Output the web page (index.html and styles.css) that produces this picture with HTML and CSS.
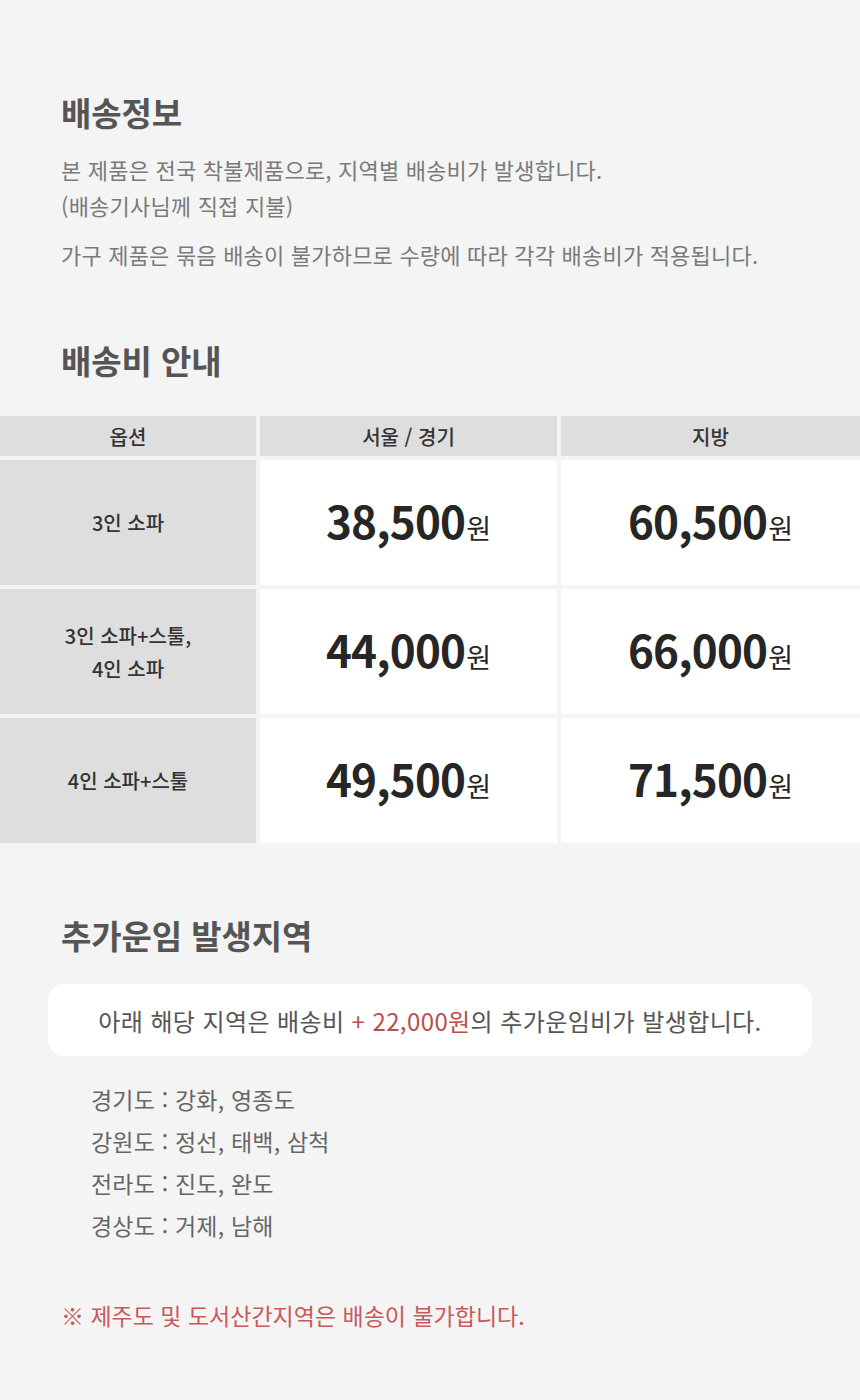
FILE: index.html
```html
<!DOCTYPE html>
<html lang="ko">
<head>
<meta charset="utf-8">
<link rel="stylesheet" href="styles.css">
</head>
<body>
<div class="page">
  <section class="info">
    <h2 class="title">배송정보</h2>
    <p class="desc">본 제품은 전국 착불제품으로, 지역별 배송비가 발생합니다.<br>(배송기사님께 직접 지불)</p>
    <p class="desc second">가구 제품은 묶음 배송이 불가하므로 수량에 따라 각각 배송비가 적용됩니다.</p>
  </section>

  <section class="fee">
    <h2 class="title">배송비 안내</h2>
  </section>
  <div class="table">
    <div class="th">옵션</div>
    <div class="th">서울 / 경기</div>
    <div class="th">지방</div>

    <div class="opt">3인 소파</div>
    <div class="price"><span class="amt">38,500<span class="won">원</span></span></div>
    <div class="price"><span class="amt">60,500<span class="won">원</span></span></div>

    <div class="opt">3인 소파+스툴,<br>4인 소파</div>
    <div class="price"><span class="amt">44,000<span class="won">원</span></span></div>
    <div class="price"><span class="amt">66,000<span class="won">원</span></span></div>

    <div class="opt">4인 소파+스툴</div>
    <div class="price"><span class="amt">49,500<span class="won">원</span></span></div>
    <div class="price"><span class="amt">71,500<span class="won">원</span></span></div>
  </div>

  <section class="extra">
    <h2 class="title">추가운임 발생지역</h2>
    <div class="notice"><span>아래 해당 지역은 배송비 <span class="red">+ 22,000원</span>의 추가운임비가 발생합니다.</span></div>
    <ul class="regions">
      <li>경기도 : 강화, 영종도</li>
      <li>강원도 : 정선, 태백, 삼척</li>
      <li>전라도 : 진도, 완도</li>
      <li>경상도 : 거제, 남해</li>
    </ul>
    <p class="warn">※ 제주도 및 도서산간지역은 배송이 불가합니다.</p>
  </section>
</div>
</body>
</html>
```

FILE: styles.css
```css
* { box-sizing: border-box; }
html, body {
  margin: 0;
  padding: 0;
  background: #f4f4f4;
}
body {
  font-family: "Noto Sans CJK KR", "Noto Sans", sans-serif;
  color: #777;
}
.page {
  width: 860px;
  height: 1400px;
  padding-top: 90px;
}
.title {
  margin: 0;
  font-size: 33px;
  font-weight: 700;
  color: #555;
  letter-spacing: -0.1px;
  line-height: 44px;
}
.info, .fee, .extra {
  padding: 0 40px 0 61px;
}
.desc {
  margin: 0;
  font-size: 22px;
  line-height: 36px;
  letter-spacing: 0.2px;
  color: #7a7a7a;
}
.info .title { margin-bottom: 17px; }
.desc.second { margin-top: 13px; }

.fee { margin-top: 66px; }
.table {
  margin-top: 34px;
  display: grid;
  grid-template-columns: 256px 297px 1fr;
  grid-template-rows: 40px 125px 125px 125px;
  gap: 4px;
}
.th {
  background: #dedede;
  display: flex;
  align-items: center;
  justify-content: center;
  font-size: 20px;
  font-weight: 500;
  color: #333;
}
.opt {
  background: #dedede;
  display: flex;
  align-items: center;
  justify-content: center;
  text-align: center;
  font-size: 20px;
  font-weight: 500;
  line-height: 33px;
  color: #333;
}
.price {
  background: #fff;
  display: flex;
  align-items: center;
  justify-content: center;
}
.amt {
  font-size: 44px;
  font-weight: 700;
  color: #262626;
  letter-spacing: -0.8px;
  line-height: 56px;
  padding-top: 2px;
}
.won {
  font-size: 27px;
  font-weight: 400;
  letter-spacing: 0;
  margin-left: 1px;
}

.extra {
  margin-top: 70px;
}
.notice {
  margin: 27px 0 0 -13px;
  width: 764px;
  height: 72px;
  border-radius: 16px;
  background: #fff;
  display: flex;
  align-items: center;
  justify-content: center;
  font-size: 24px;
  color: #555;
  letter-spacing: 0.4px;
}
.red { color: #b94f4c; }
.regions {
  list-style: none;
  margin: 22px 0 0 30px;
  padding: 0;
}
.regions li {
  font-size: 23px;
  line-height: 42px;
  color: #666;
  letter-spacing: 0.2px;
}
.warn {
  margin: 48px 0 0;
  font-size: 23px;
  line-height: 42px;
  color: #c9595a;
}
```
